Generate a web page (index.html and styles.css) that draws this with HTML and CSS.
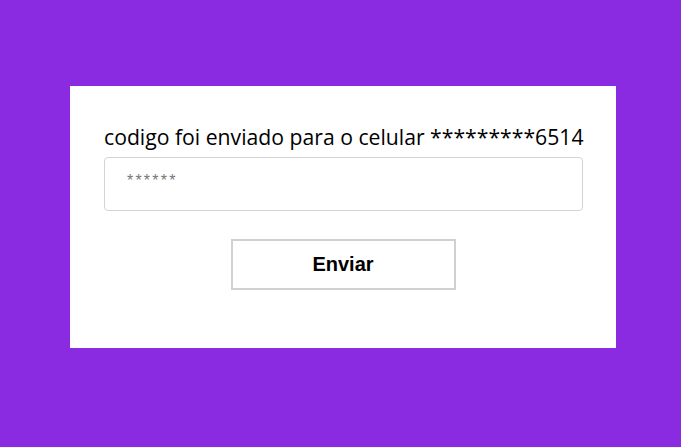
FILE: index.html
```html
<!DOCTYPE html>
<html>
<head>
<meta charset="utf-8">
<link rel="stylesheet" href="styles.css">
</head>
<body>
<div class="page">
  <div class="card">
    <p class="msg">codigo foi enviado para o celular *********6514</p>
    <input class="code" type="text" placeholder="******">
    <div class="actions">
      <button class="send">Enviar</button>
    </div>
  </div>
</div>
</body>
</html>
```
FILE: styles.css
```css
html, body {
  margin: 0;
  padding: 0;
  background: #8a2be2;
}
.page {
  width: 681px;
  height: 447px;
  padding-top: 86px;
  padding-left: 70px;
  box-sizing: border-box;
}
.card {
  width: 546px;
  height: 262px;
  background: #fff;
  box-sizing: border-box;
  padding: 36px 33px 0 34px;
  display: flex;
  flex-direction: column;
}
.msg {
  margin: 0 0 6px 0;
  font-family: "Open Sans", "Noto Sans", sans-serif;
  font-size: 21.2px;
  line-height: 29px;
  color: #000;
  white-space: nowrap;
}
.code {
  height: 54px;
  width: 479px;
  box-sizing: border-box;
  border: 1px solid #d4d4d4;
  border-radius: 4px;
  padding: 0 22px 6px 22px;
  font-family: "Liberation Sans", Arial, sans-serif;
  font-size: 16px;
  letter-spacing: 2.2px;
  outline: none;
}
.code::placeholder {
  color: #777;
}
.actions {
  display: flex;
  justify-content: center;
  margin-top: 28px;
}
.send {
  width: 225px;
  height: 51px;
  background: #fff;
  border: 2px solid #d0d0d0;
  font-family: "Liberation Sans", Arial, sans-serif;
  font-weight: bold;
  font-size: 20px;
  color: #000;
  margin-left: -1px;
}
```
